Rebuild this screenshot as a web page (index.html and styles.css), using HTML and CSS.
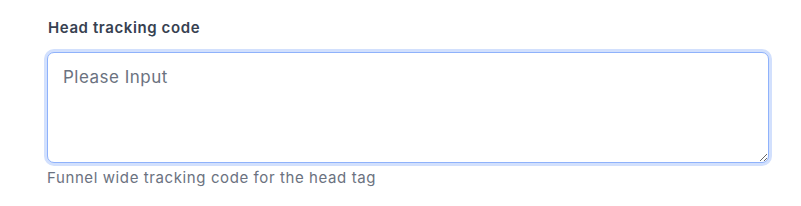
FILE: index.html
```html
<!DOCTYPE html>
<html lang="en">
<head>
    <meta charset="UTF-8">
    <meta name="viewport" content="width=device-width, initial-scale=1.0">
    <title>Tracking code</title>
    <link rel="stylesheet" href="styles.css">
</head>
<body>
    <div class="field">
        <label for="head-code">Head tracking code</label>
        <textarea id="head-code" name="head-code" placeholder="Please Input"></textarea>
        <p class="hint">Funnel wide tracking code for the head tag</p>
    </div>
</body>
</html>
```

FILE: styles.css
```css
body {
    margin: 0;
    background-color: #fff;
    font-family: Inter, "Noto Sans", sans-serif;
}
.field {
    display: flex;
    flex-direction: column;
    padding: 18px 32px 0 47px;
}
label {
    font-size: 15px;
    line-height: 20px;
    font-weight: 600;
    letter-spacing: 0.6px;
    color: #374151;
    margin-left: 1px;
    margin-bottom: 14px;
}
textarea {
    box-sizing: border-box;
    width: 722px;
    height: 111px;
    padding: 12px 15px;
    border: 1px solid #8fb2fb;
    border-radius: 7px;
    box-shadow: 0 0 0 3px #d2e0fd;
    outline: none;
    font-family: Inter, "Noto Sans", sans-serif;
    font-size: 17px;
    line-height: 24px;
    letter-spacing: 0.5px;
    color: #111827;
}
textarea::placeholder {
    color: #6b7280;
}
.hint {
    margin: 5px 0 0;
    font-family: Inter, "Noto Sans", sans-serif;
    font-size: 15px;
    line-height: 20px;
    letter-spacing: 0.6px;
    color: #6b7280;
}
```
